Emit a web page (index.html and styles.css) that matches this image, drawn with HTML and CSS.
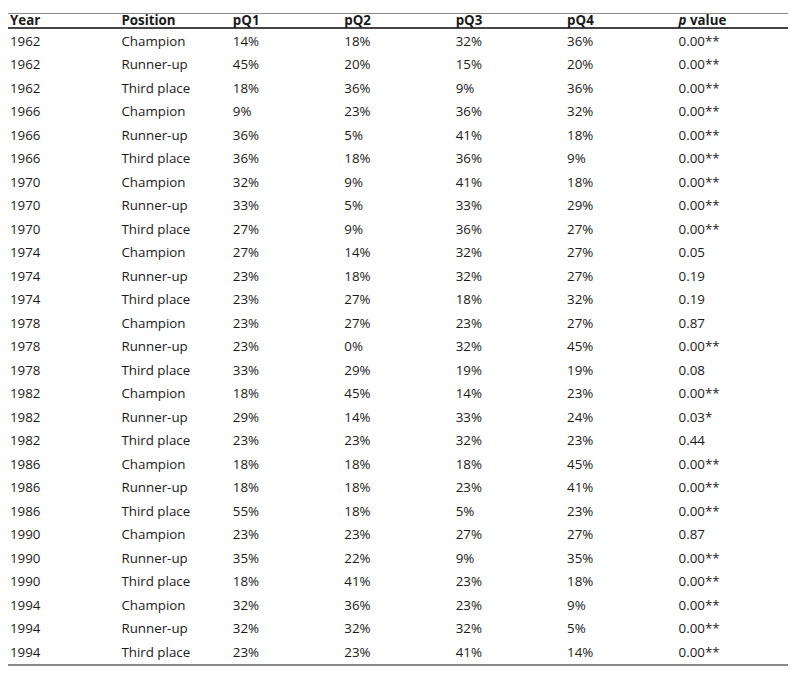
FILE: index.html
```html
<!DOCTYPE html>
<html lang="en">
<head>
  <meta charset="UTF-8">
  <title>World Cup results by quarter</title>
  <meta name="viewport" content="width=device-width, initial-scale=1">
  <link rel="stylesheet" href="styles.css">
</head>
<body>

  <table class="results">
    <colgroup>
      <col><col><col><col><col><col><col>
    </colgroup>
    <thead>
      <tr>
        <th>Year</th>
        <th>Position</th>
        <th>pQ1</th>
        <th>pQ2</th>
        <th>pQ3</th>
        <th>pQ4</th>
        <th><i>p</i> value</th>
      </tr>
    </thead>
    <tbody id="rows"></tbody>
  </table>

  <script>
    // year, position, pQ1..pQ4, p value
    const data = [
      ['1962', 'Champion',    '14%', '18%', '32%', '36%', '0.00**'],
      ['1962', 'Runner-up',   '45%', '20%', '15%', '20%', '0.00**'],
      ['1962', 'Third place', '18%', '36%', '9%',  '36%', '0.00**'],
      ['1966', 'Champion',    '9%',  '23%', '36%', '32%', '0.00**'],
      ['1966', 'Runner-up',   '36%', '5%',  '41%', '18%', '0.00**'],
      ['1966', 'Third place', '36%', '18%', '36%', '9%',  '0.00**'],
      ['1970', 'Champion',    '32%', '9%',  '41%', '18%', '0.00**'],
      ['1970', 'Runner-up',   '33%', '5%',  '33%', '29%', '0.00**'],
      ['1970', 'Third place', '27%', '9%',  '36%', '27%', '0.00**'],
      ['1974', 'Champion',    '27%', '14%', '32%', '27%', '0.05'],
      ['1974', 'Runner-up',   '23%', '18%', '32%', '27%', '0.19'],
      ['1974', 'Third place', '23%', '27%', '18%', '32%', '0.19'],
      ['1978', 'Champion',    '23%', '27%', '23%', '27%', '0.87'],
      ['1978', 'Runner-up',   '23%', '0%',  '32%', '45%', '0.00**'],
      ['1978', 'Third place', '33%', '29%', '19%', '19%', '0.08'],
      ['1982', 'Champion',    '18%', '45%', '14%', '23%', '0.00**'],
      ['1982', 'Runner-up',   '29%', '14%', '33%', '24%', '0.03*'],
      ['1982', 'Third place', '23%', '23%', '32%', '23%', '0.44'],
      ['1986', 'Champion',    '18%', '18%', '18%', '45%', '0.00**'],
      ['1986', 'Runner-up',   '18%', '18%', '23%', '41%', '0.00**'],
      ['1986', 'Third place', '55%', '18%', '5%',  '23%', '0.00**'],
      ['1990', 'Champion',    '23%', '23%', '27%', '27%', '0.87'],
      ['1990', 'Runner-up',   '35%', '22%', '9%',  '35%', '0.00**'],
      ['1990', 'Third place', '18%', '41%', '23%', '18%', '0.00**'],
      ['1994', 'Champion',    '32%', '36%', '23%', '9%',  '0.00**'],
      ['1994', 'Runner-up',   '32%', '32%', '32%', '5%',  '0.00**'],
      ['1994', 'Third place', '23%', '23%', '41%', '14%', '0.00**']
    ];

    const tbody = document.getElementById('rows');
    data.forEach(row => {
      const tr = document.createElement('tr');
      row.forEach(val => {
        const td = document.createElement('td');
        td.textContent = val;
        tr.appendChild(td);
      });
      tbody.appendChild(tr);
    });
  </script>
</body>
</html>
```

FILE: styles.css
```css
body {
  margin: 0;
  padding: 13px 12px 0 8px;
  background: #fff;
  color: #1a1a1a;
  font-family: "Open Sans", "Noto Sans", sans-serif;
  font-size: 13.33px;
}

.results {
  width: 780px;
  table-layout: fixed;
  border-collapse: collapse;
  border-top: 1px solid #8a8a8a;
  border-bottom: 2px solid #8a8a8a;
}

.results th,
.results td {
  text-align: left;
  padding: 0 0 0 2px;
  white-space: nowrap;
}

/* header row */
.results thead th {
  font-weight: bold;
  line-height: 13px;
  padding-top: 0;
  border-bottom: 2px solid #444;
}

.results td {
  height: 23.5px;
  line-height: 18px;
  padding-top: 2.75px;
  padding-bottom: 2.75px;
  box-sizing: border-box;
}
```
